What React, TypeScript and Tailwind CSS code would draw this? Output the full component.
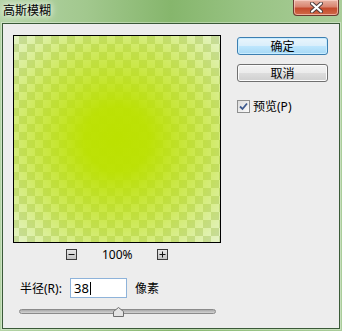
import React from "react";

const cjk = "font-['Noto_Sans_CJK_SC','Noto_Sans',sans-serif]";

const WinButton = ({
  children,
  primary,
  className,
}: {
  children: React.ReactNode;
  primary?: boolean;
  className?: string;
}) => (
  <div
    className={`flex h-[18px] w-[91px] items-center justify-center rounded-[3px] border text-[12px] leading-none text-black ${
      primary
        ? "border-[#3c7fb1] bg-[linear-gradient(#e9f5fc_0%,#d9eefb_50%,#bee6fd_51%,#a7d9f5_100%)] shadow-[inset_0_0_0_1px_#c8ecff]"
        : "border-[#707070] bg-[linear-gradient(#f2f2f2_0%,#ebebeb_50%,#dddddd_51%,#cfcfcf_100%)] shadow-[inset_0_0_0_1px_#fcfcfc]"
    } ${className ?? ""}`}
  >
    {children}
  </div>
);

const ZoomBtn = ({ plus }: { plus?: boolean }) => (
  <div className="flex h-[11px] w-[11px] items-center justify-center border border-[#3a3a3a] bg-[linear-gradient(#e6e6e6,#c4c4c4)]">
    <svg width="7" height="7" viewBox="0 0 7 7">
      <rect x="0.5" y="3" width="6" height="1" fill="#111" />
      {plus && <rect x="3" y="0.5" width="1" height="6" fill="#111" />}
    </svg>
  </div>
);

export default function App() {
  return (
    <div
      className={`flex h-[331px] w-[342px] flex-col overflow-hidden bg-[linear-gradient(90deg,#b4d4a6_0%,#a2c88e_25%,#86b66c_50%,#98c383_72%,#aacd9a_100%)] ${cjk}`}
    >
      {/* title bar */}
      <div className="flex h-[23px] items-start justify-between">
        <div className="pl-[3px] pt-[2px] text-[12px] leading-[16px] text-black [text-shadow:0_0_6px_#fff,0_0_10px_#fff]">
          高斯模糊
        </div>
        <div className="mr-[3px] flex h-[16px] w-[46px] items-center justify-center rounded-b-[4px] border border-t-0 border-[#6b3a30] bg-[linear-gradient(#e7b3a4_0%,#d98570_45%,#c44a2c_55%,#d06a48_100%)] shadow-[inset_0_0_0_1px_rgba(255,220,210,0.6)]">
          <svg width="13" height="11" viewBox="0 0 13 11">
            <path
              d="M2 1.5 L11 9.5 M11 1.5 L2 9.5"
              stroke="#4a3a3a"
              strokeWidth="4"
              strokeLinecap="round"
            />
            <path
              d="M2 1.5 L11 9.5 M11 1.5 L2 9.5"
              stroke="#ffffff"
              strokeWidth="2.2"
              strokeLinecap="round"
            />
          </svg>
        </div>
      </div>

      {/* client area */}
      <div className="mx-[2px] mb-[2px] flex-1 border border-[#3a5a38] bg-[#ededed] shadow-[0_0_0_1px_rgba(255,255,255,0.35)]">
        <div className="flex pl-[10px] pt-[11px]">
          <div className="flex w-[208px] flex-col">
            {/* preview */}
            <div className="h-[208px] w-[208px] border border-black bg-[repeating-conic-gradient(#c8dba8_0_25%,#e7f4d3_0_50%)] bg-[length:16px_16px] bg-[position:-3px_0px]">
              <div className="h-full w-full bg-[radial-gradient(circle_farthest-corner_at_50%_50%,#bce100_0%,rgba(188,225,0,0.97)_22%,rgba(188,225,0,0.55)_62%,rgba(188,225,0,0.05)_100%)]" />
            </div>

            {/* zoom controls */}
            <div className="mt-[6px] flex h-[11px] items-center justify-center gap-[25px]">
              <ZoomBtn />
              <div className="w-[30px] text-center font-['Noto_Sans',sans-serif] text-[12px] leading-none text-black">
                100%
              </div>
              <ZoomBtn plus />
            </div>

            {/* radius */}
            <div className="mt-[18px] flex items-center pl-[7px] text-[12px] text-black">
              <span className="w-[50px]">
                半径<span className="font-['Noto_Sans',sans-serif]">(R):</span>
              </span>
              <div className="flex h-[20px] w-[57px] items-center border border-[#8eb3da] bg-white pl-[3px] font-['Noto_Sans',sans-serif] text-[13px] leading-none">
                38
                <span className="ml-[1px] h-[13px] w-px bg-black" />
              </div>
              <span className="ml-[8px]">像素</span>
            </div>

            {/* slider */}
            <div className="relative ml-[6px] mt-[9px] h-[10px] w-[197px]">
              <div className="mt-[2px] h-[5px] w-full rounded-[3px] border border-[#8b8b8b] bg-[linear-gradient(#a8a8a8,#d4d4d4)]" />
              <svg
                className="absolute left-[94px] top-0"
                width="11"
                height="10"
                viewBox="0 0 11 10"
              >
                <path
                  d="M0.5 9.5 L0.5 4.5 L5.5 0.5 L10.5 4.5 L10.5 9.5 Z"
                  fill="#e4e4e4"
                  stroke="#6e6e6e"
                />
              </svg>
            </div>
          </div>

          {/* right column */}
          <div className="ml-[16px] flex flex-col pt-[2px]">
            <WinButton primary>确定</WinButton>
            <WinButton className="mt-[9px]">取消</WinButton>
            <div className="mt-[15px] flex items-center text-[12px] text-black">
              <div className="flex h-[13px] w-[13px] items-center justify-center border border-[#8e8f8f] bg-[linear-gradient(135deg,#dcdcdc,#fbfbfb)]">
                <svg width="9" height="9" viewBox="0 0 9 9">
                  <path
                    d="M1 4.5 L3.5 7 L8 1.5"
                    stroke="#3e5a8e"
                    strokeWidth="1.8"
                    fill="none"
                  />
                </svg>
              </div>
              <span className="ml-[3px]">
                预览<span className="font-['Noto_Sans',sans-serif]">(P)</span>
              </span>
            </div>
          </div>
        </div>
      </div>
    </div>
  );
}
